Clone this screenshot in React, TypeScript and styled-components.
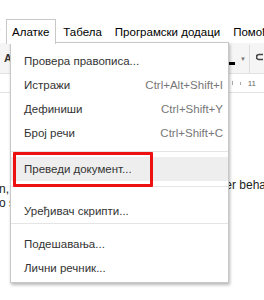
import React from 'react';
import styled, { createGlobalStyle } from 'styled-components';

const Global = createGlobalStyle`
  html, body { margin: 0; padding: 0; background: #fff; }
  body { width: 264px; height: 300px; overflow: hidden; font-family: "Liberation Sans", Arial, sans-serif; }
`;

const Screen = styled.div`
  position: relative;
  width: 264px;
  height: 300px;
  overflow: hidden;
  background: #fff;
  display: flex;
  flex-direction: column;
`;

const TitleArea = styled.div`
  height: 19px;
  flex: none;
`;

const MenuBar = styled.div`
  display: flex;
  height: 24px;
  flex: none;
  font-size: 11.5px;
  color: #000;
  white-space: nowrap;
`;

const CutItem = styled.div`
  width: 4px;
  padding-right: 6px;
  overflow: hidden;
  display: flex;
  align-items: center;
  justify-content: flex-end;
`;

const MenuTab = styled.div<{ $active?: boolean }>`
  display: flex;
  align-items: center;
  padding: 0 5px 0 6px;
  border: 1px solid transparent;
  border-bottom: none;
  ${(p) =>
    p.$active &&
    `
    padding: 0 6px 0 5px;
    border-color: #c8c8c8;
    background: #fff;
    position: relative;
    z-index: 5;
    height: 25px;
    box-sizing: border-box;
  `}
`;

const Toolbar = styled.div`
  height: 30px;
  flex: none;
  background: #f5f5f5;
  border-bottom: 1px solid #e2e2e2;
  display: flex;
  align-items: center;
  padding-left: 4px;
  position: relative;
`;

const ToolLetter = styled.span`
  font-size: 11px;
  font-weight: bold;
  color: #333;
`;

const ToolRight = styled.div`
  margin-left: auto;
  display: flex;
  align-items: stretch;
  height: 100%;
`;

const ColorA = styled.div`
  width: 7px;
  display: flex;
  align-items: flex-end;
  padding-bottom: 8px;
  margin-right: 3px;
`;

const ColorBar = styled.div`
  width: 7px;
  height: 3px;
  background: #000;
`;

const Caret = styled.div`
  width: 10px;
  display: flex;
  align-items: center;
  justify-content: center;
  font-size: 6px;
  color: #777;
  padding-top: 2px;
  margin-right: 1px;
`;

const ToolSep = styled.div`
  width: 1px;
  background: #dcdcdc;
  margin: 2px 6px 0 0;
`;

const ToolIcon = styled.div`
  display: flex;
  align-items: center;
  padding-bottom: 2px;
`;

const Ruler = styled.div`
  height: 18px;
  flex: none;
  border-bottom: 1px solid #e4e4e4;
  display: flex;
  align-items: center;
  justify-content: flex-end;
  gap: 7px;
  padding-right: 8px;
  background: #fff;
`;

const Tick = styled.div<{ $h: number }>`
  width: 1px;
  height: ${(p) => p.$h}px;
  background: #aaa;
`;

const RulerNum = styled.span`
  font-size: 8px;
  color: #666;
`;

const Page = styled.div`
  flex: 1;
  display: flex;
  justify-content: space-between;
  font-size: 12px;
  color: #222;
  line-height: 14px;
`;

const LeftText = styled.div`
  margin-top: 89px;
  margin-left: -1px;
`;

const RightText = styled.div`
  margin-top: 85px;
  margin-right: -2px;
`;

const Dropdown = styled.div`
  position: absolute;
  left: 10px;
  top: 42px;
  width: 219px;
  height: 241px;
  background: #fff;
  border: 1px solid #c8c8c8;
  box-shadow: 1px 2px 3px rgba(0, 0, 0, 0.28);
  z-index: 4;
  box-sizing: border-box;
  font-size: 11.5px;
`;

const MenuList = styled.div`
  display: flex;
  flex-direction: column;
  padding-top: 6px;
`;

const Item = styled.div<{ $hl?: boolean }>`
  height: 24px;
  flex: none;
  display: flex;
  align-items: center;
  justify-content: space-between;
  padding: 0 5px 0 13px;
  color: #333;
  white-space: nowrap;
  position: relative;
  background: ${(p) => (p.$hl ? '#eeeeee' : 'transparent')};
`;

const Shortcut = styled.span`
  color: #777;
`;

const Separator = styled.div<{ $mt: number; $mb: number }>`
  height: 1px;
  flex: none;
  background: #e5e5e5;
  margin: ${(p) => p.$mt}px 0 ${(p) => p.$mb}px;
`;

const RedBox = styled.div`
  position: absolute;
  left: 2px;
  top: -5px;
  width: 140px;
  height: 35px;
  border: 3px solid #ee1111;
  box-sizing: border-box;
  border-radius: 1px;
`;

const items1 = [
  { label: 'Провера правописа...', sc: '' },
  { label: 'Истражи', sc: 'Ctrl+Alt+Shift+I' },
  { label: 'Дефиниши', sc: 'Ctrl+Shift+Y' },
  { label: 'Број речи', sc: 'Ctrl+Shift+C' },
];

export default function App() {
  return (
    <>
      <Global />
      <Screen>
        <TitleArea />
        <MenuBar>
          <CutItem>Формат</CutItem>
          <MenuTab $active>Алатке</MenuTab>
          <MenuTab>Табела</MenuTab>
          <MenuTab>Програмски додаци</MenuTab>
          <MenuTab>Помоћ</MenuTab>
        </MenuBar>
        <Toolbar>
          <ToolLetter>A</ToolLetter>
          <ToolRight>
            <ColorA>
              <ColorBar />
            </ColorA>
            <Caret>▼</Caret>
            <ToolSep />
            <ToolIcon>
              <svg width="8" height="8" viewBox="0 0 8 8">
                <path d="M7 1.5 H3 A2.5 2.5 0 0 0 3 6.5 H7" fill="none" stroke="#444" strokeWidth="1.6" />
              </svg>
            </ToolIcon>
          </ToolRight>
        </Toolbar>
        <Ruler>
          <Tick $h={4} />
          <Tick $h={3} />
          <RulerNum>11</RulerNum>
        </Ruler>
        <Page>
          <LeftText>
            n,
            <br />o s
          </LeftText>
          <RightText>er beha</RightText>
        </Page>
        <Dropdown>
          <MenuList>
            {items1.map((it) => (
              <Item key={it.label}>
                <span>{it.label}</span>
                <Shortcut>{it.sc}</Shortcut>
              </Item>
            ))}
            <Separator $mt={6} $mb={5} />
            <Item $hl>
              <span>Преведи документ...</span>
              <RedBox />
            </Item>
            <Separator $mt={5} $mb={12} />
            <Item>
              <span>Уређивач скрипти...</span>
            </Item>
            <Separator $mt={0} $mb={8} />
            <Item>
              <span>Подешавања...</span>
            </Item>
            <Item>
              <span>Лични речник...</span>
            </Item>
          </MenuList>
        </Dropdown>
      </Screen>
    </>
  );
}
